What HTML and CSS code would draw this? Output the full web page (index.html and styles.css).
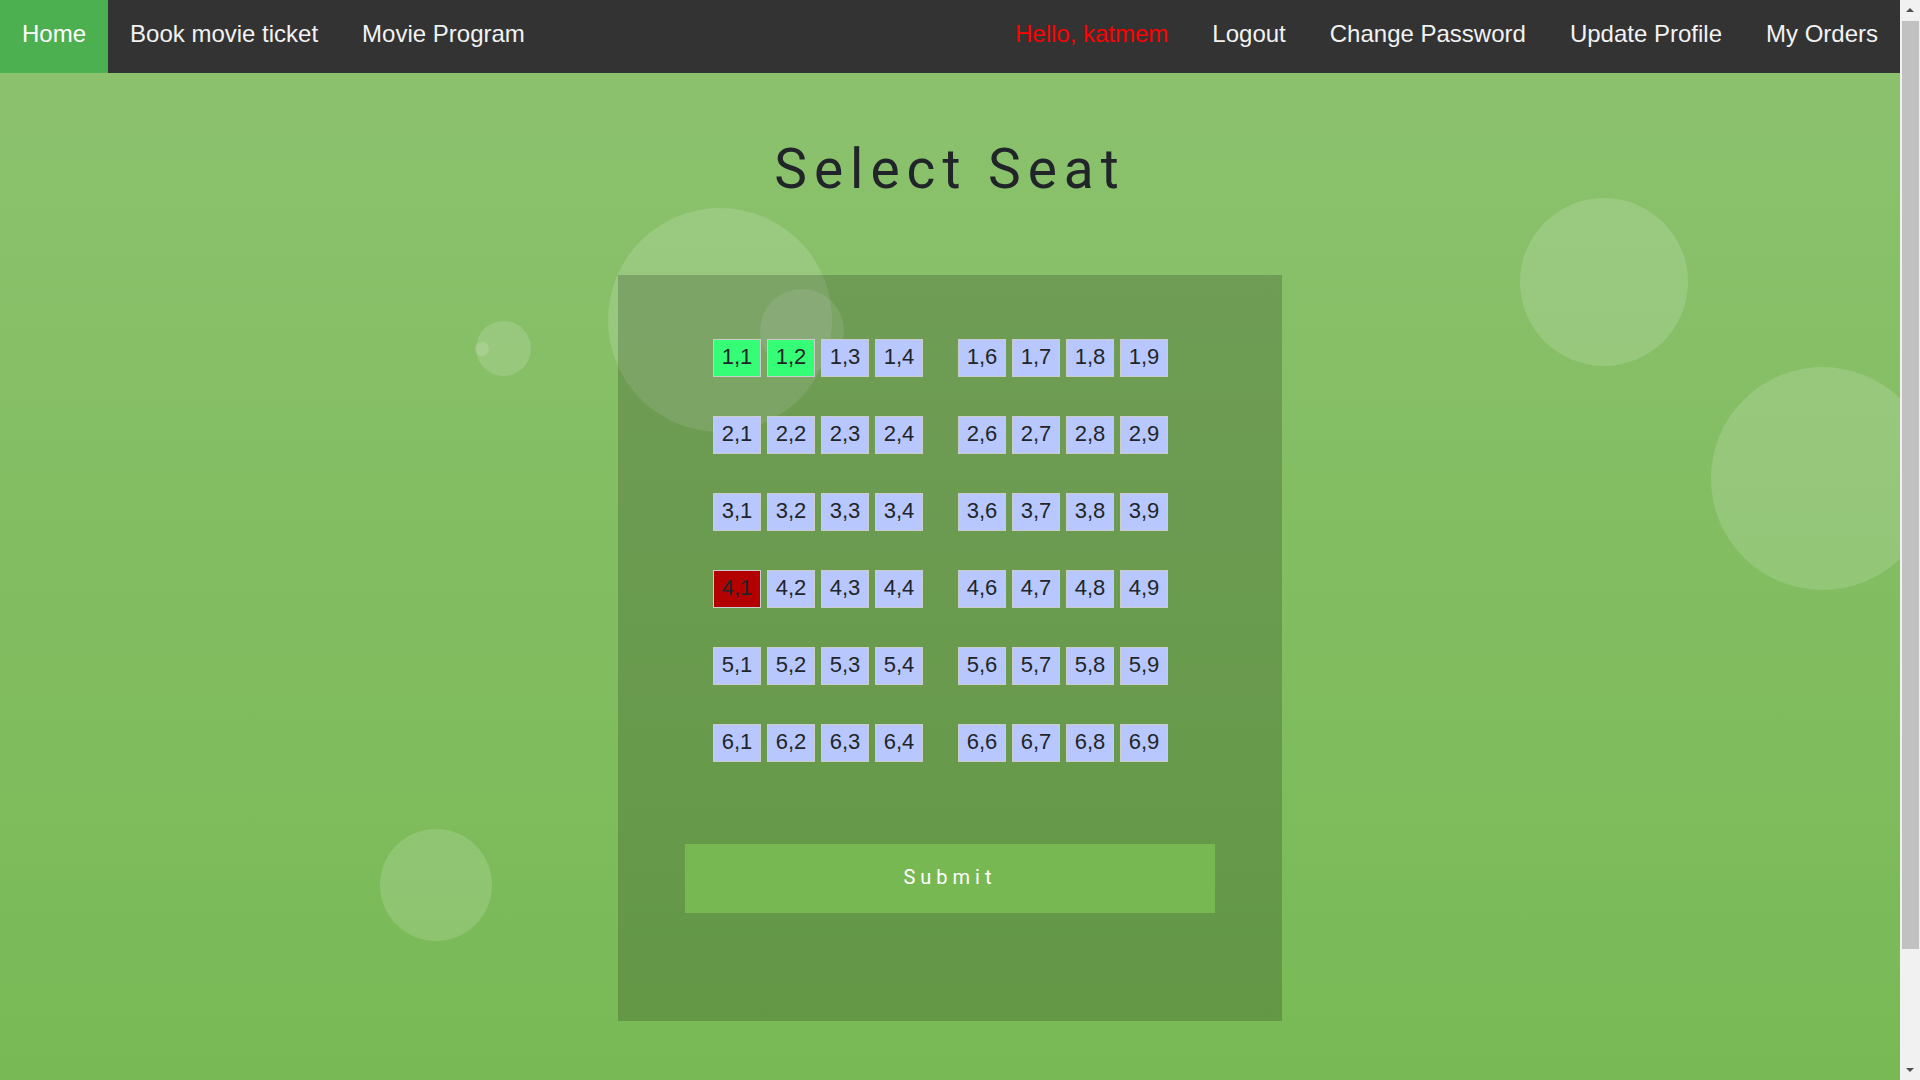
FILE: index.html
```html
<!DOCTYPE html>
<html lang="en">
<head>
<meta charset="utf-8">
<title>Select Seat</title>
<link rel="stylesheet" href="styles.css">
</head>
<body>
<ul class="bubbles">
  <li class="bubble b1"></li>
  <li class="bubble b2"></li>
  <li class="bubble b3"></li>
  <li class="bubble b4"></li>
  <li class="bubble b5"></li>
  <li class="bubble b6"></li>
  <li class="bubble b7"></li>
</ul>
<nav class="topnav">
  <div class="nav-group">
    <a class="nav-link active" href="#">Home</a>
    <a class="nav-link" href="#">Book movie ticket</a>
    <a class="nav-link" href="#">Movie Program</a>
  </div>
  <div class="nav-group nav-right">
    <a class="nav-link hello" href="#">Hello, katmem</a>
    <a class="nav-link" href="#">Logout</a>
    <a class="nav-link" href="#">Change Password</a>
    <a class="nav-link" href="#">Update Profile</a>
    <a class="nav-link" href="#">My Orders</a>
  </div>
</nav>
<main class="page">
  <h1 class="title">Select Seat</h1>
  <form class="panel">
    <div class="seatmap">
      <div class="seat-row">
        <span class="seat chosen">1,1</span><span class="seat chosen">1,2</span><span class="seat">1,3</span><span class="seat">1,4</span>
        <span class="aisle"></span>
        <span class="seat">1,6</span><span class="seat">1,7</span><span class="seat">1,8</span><span class="seat">1,9</span>
      </div>
      <div class="seat-row">
        <span class="seat">2,1</span><span class="seat">2,2</span><span class="seat">2,3</span><span class="seat">2,4</span>
        <span class="aisle"></span>
        <span class="seat">2,6</span><span class="seat">2,7</span><span class="seat">2,8</span><span class="seat">2,9</span>
      </div>
      <div class="seat-row">
        <span class="seat">3,1</span><span class="seat">3,2</span><span class="seat">3,3</span><span class="seat">3,4</span>
        <span class="aisle"></span>
        <span class="seat">3,6</span><span class="seat">3,7</span><span class="seat">3,8</span><span class="seat">3,9</span>
      </div>
      <div class="seat-row">
        <span class="seat taken">4,1</span><span class="seat">4,2</span><span class="seat">4,3</span><span class="seat">4,4</span>
        <span class="aisle"></span>
        <span class="seat">4,6</span><span class="seat">4,7</span><span class="seat">4,8</span><span class="seat">4,9</span>
      </div>
      <div class="seat-row">
        <span class="seat">5,1</span><span class="seat">5,2</span><span class="seat">5,3</span><span class="seat">5,4</span>
        <span class="aisle"></span>
        <span class="seat">5,6</span><span class="seat">5,7</span><span class="seat">5,8</span><span class="seat">5,9</span>
      </div>
      <div class="seat-row">
        <span class="seat">6,1</span><span class="seat">6,2</span><span class="seat">6,3</span><span class="seat">6,4</span>
        <span class="aisle"></span>
        <span class="seat">6,6</span><span class="seat">6,7</span><span class="seat">6,8</span><span class="seat">6,9</span>
      </div>
    </div>
    <button class="submit" type="button">Submit</button>
  </form>
</main>
<div class="scrollbar" aria-hidden="true">
  <div class="sb-btn"><span class="sb-arrow up"></span></div>
  <div class="sb-thumb"></div>
  <div class="sb-rest"></div>
  <div class="sb-btn"><span class="sb-arrow down"></span></div>
</div>
</body>
</html>
```

FILE: styles.css
```css
html, body {
  padding: 0;
}

html {
  margin: 0;
  background: #76b852;
}

body {
  position: relative;
  margin: 0 20px 0 0;
  font-family: "Liberation Sans", Arial, sans-serif;
  background: linear-gradient(to bottom, #8dc26f, #76b852);
  min-height: 1207px;
}

.bubbles {
  position: absolute;
  top: 0;
  left: 0;
  right: 0;
  bottom: 0;
  margin: 0;
  padding: 0;
  list-style: none;
  overflow: hidden;
  z-index: 0;
}

.bubble {
  position: absolute;
  display: block;
  border-radius: 50%;
  background: rgba(255, 255, 255, 0.15);
}

.b1 { left: 608px; top: 208px; width: 224px; height: 224px; }
.b2 { left: 760px; top: 289px; width: 84px; height: 84px; }
.b3 { left: 476px; top: 321px; width: 55px; height: 55px; }
.b4 { left: 475px; top: 342px; width: 14px; height: 14px; }
.b5 { left: 1520px; top: 198px; width: 168px; height: 168px; }
.b6 { left: 1711px; top: 367px; width: 223px; height: 223px; }
.b7 { left: 380px; top: 829px; width: 112px; height: 112px; }

.topnav {
  position: relative;
  z-index: 1;
  display: flex;
  justify-content: space-between;
  height: 73px;
  background: #333333;
}

.nav-group {
  display: flex;
}

.nav-link {
  display: block;
  box-sizing: border-box;
  height: 73px;
  padding: 20px 22px 0;
  font-size: 24px;
  line-height: normal;
  color: #f2f2f2;
  text-decoration: none;
}

.nav-link.active {
  background: #4caf50;
  color: #ffffff;
}

.nav-link.hello {
  color: #ff0000;
}

.page {
  position: relative;
  z-index: 1;
  display: flex;
  flex-direction: column;
  align-items: center;
  padding-bottom: 185px;
}

.title {
  margin: 64px 0 74px;
  font-family: Roboto, "Liberation Sans", sans-serif;
  font-weight: 400;
  font-size: 55px;
  line-height: 64px;
  letter-spacing: 7px;
  color: #212529;
}

.panel {
  box-sizing: border-box;
  width: 664px;
  margin: 0;
  padding: 64px 67px 108px;
  background: rgba(0, 0, 0, 0.18);
  display: flex;
  flex-direction: column;
}

.seatmap {
  display: flex;
  flex-direction: column;
  gap: 39px;
  margin-left: 28px;
}

.seat-row {
  display: flex;
  gap: 6px;
}

.seat {
  box-sizing: border-box;
  width: 48px;
  height: 38px;
  padding-bottom: 3px;
  border: 1px solid #cccccc;
  background: #b8c8fe;
  color: #212529;
  font-size: 22px;
  line-height: 33px;
  text-align: center;
}

.seat.chosen {
  background: #36fd76;
}

.seat.taken {
  background: #b30000;
}

.aisle {
  width: 23px;
}

.submit {
  display: block;
  width: 100%;
  height: 69px;
  margin-top: 82px;
  padding: 0 0 4px;
  border: 0;
  background: #77b853;
  color: #ffffff;
  font-family: Roboto, "Liberation Sans", sans-serif;
  font-weight: 400;
  font-size: 20px;
  letter-spacing: 5px;
  text-align: center;
}

.scrollbar {
  position: fixed;
  top: 0;
  right: 0;
  z-index: 5;
  width: 20px;
  height: 100vh;
  background: #f1f1f1;
  display: flex;
  flex-direction: column;
}

.sb-btn {
  height: 20px;
  display: flex;
  align-items: center;
  justify-content: center;
}

.sb-arrow {
  width: 0;
  height: 0;
  border-left: 4px solid transparent;
  border-right: 4px solid transparent;
}

.sb-arrow.up {
  border-bottom: 4px solid #505050;
}

.sb-arrow.down {
  border-top: 4px solid #505050;
}

.sb-thumb {
  height: 928px;
  margin: 1px 1px 0 2px;
  background: #c1c1c1;
}

.sb-rest {
  flex: 1;
}
```
